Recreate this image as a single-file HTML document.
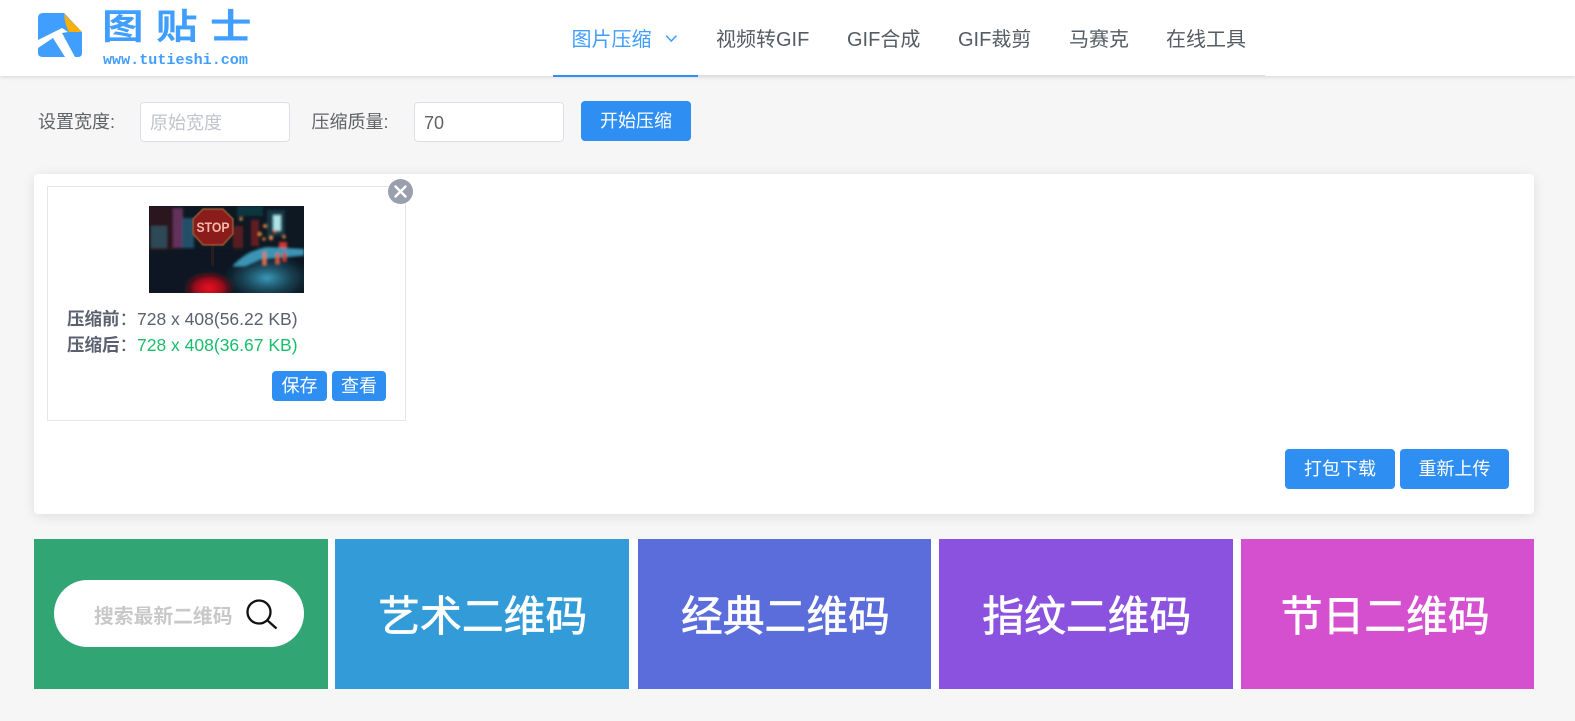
<!DOCTYPE html>
<html lang="zh"><head><meta charset="utf-8"><title>图贴士</title>
<style>
*{box-sizing:border-box}
html,body{margin:0;padding:0}
body{width:1575px;height:721px;overflow:hidden;position:relative;background:#f6f6f6;font-family:"Liberation Sans","Noto Sans CJK SC",sans-serif;color:#606266;font-size:14px}
.a{position:absolute;white-space:nowrap}
.nav{font-size:20px;top:26px;line-height:29px;color:#545c64}
.lbl{font-size:18px;color:#606266;top:110px;line-height:24px}
.inp{top:102px;width:150px;height:40px;background:#fff;border:1px solid #dcdfe6;border-radius:4px;font-size:18px;line-height:40px;padding-left:9px}
.btn{background:#2e8ef2;color:#fff;border-radius:4px;text-align:center}
.ban{top:539px;width:293.500px;height:150px;color:#fff;font-size:41.800px;line-height:156px;text-align:center;font-weight:400;-webkit-text-stroke:.7px #fff;padding-left:2px}
</style></head><body>

<div class="a" style="left:0;top:0;width:1575px;height:76px;background:#fff;box-shadow:0 1px 4px rgba(0,0,0,.14)"></div>
<svg class="a" style="left:38px;top:13px" width="45" height="45" viewBox="0 0 45 45">
<path d="M5 0H26L44 19V40Q44 44 40 44H5Q0 44 0 40V5Q0 0 5 0Z" fill="#409eff"/>
<path d="M26 1L44 19H31Q27 12 26 1Z" fill="#fdb003"/>
<path d="M0 27L24 15L30 19L24 20L37 44H27L15 25L0 35Z" fill="#fff"/>
</svg>
<div class="a" style="left:102px;top:6px;font-size:35px;line-height:44px;letter-spacing:10.300px;color:#409eff;font-weight:700;transform:scaleX(1.19);transform-origin:0 0">图贴士</div>
<div class="a" style="left:103px;top:52px;font-family:'Liberation Mono',monospace;font-size:15.100px;line-height:16px;color:#409eff;font-weight:700">www.tutieshi.com</div>

<div class="a" style="left:553px;top:75px;width:712px;height:1px;background:#dcdcde"></div>
<div class="a" style="left:553px;top:75px;width:145px;height:2px;background:#2e8ef2"></div>
<div class="a nav" style="left:571.500px;color:#409eff">图片压缩</div>
<svg class="a" style="left:664.500px;top:33px" width="13" height="11" viewBox="0 0 13 11"><path d="M1.200 2.700L6.300 8L11.400 2.700" fill="none" stroke="#409eff" stroke-width="1.500"/></svg>
<div class="a nav" style="left:716px">视频转GIF</div>
<div class="a nav" style="left:847px">GIF合成</div>
<div class="a nav" style="left:958px">GIF裁剪</div>
<div class="a nav" style="left:1069px">马赛克</div>
<div class="a nav" style="left:1166px">在线工具</div>

<div class="a lbl" style="left:38px">设置宽度:</div>
<div class="a inp" style="left:140px;color:#c0c4cc">原始宽度</div>
<div class="a lbl" style="left:311.500px">压缩质量:</div>
<div class="a inp" style="left:414px;color:#606266">70</div>
<div class="a btn" style="left:581px;top:101px;width:110px;height:40px;font-size:18px;line-height:41px">开始压缩</div>

<div class="a" style="left:34px;top:174px;width:1500px;height:340px;background:#fff;border-radius:4px;box-shadow:0 2px 12px rgba(0,0,0,.1)"></div>
<div class="a" style="left:47px;top:186px;width:359px;height:235px;border:1px solid #e6e6e6;background:#fff"></div>
<svg class="a" style="left:149px;top:206px" width="155" height="87" viewBox="0 0 155 87">
<defs>
<radialGradient id="r1"><stop offset="0" stop-color="#f00a24"/><stop offset=".55" stop-color="#9a0a1c"/><stop offset="1" stop-color="#5a0a14" stop-opacity="0"/></radialGradient>
<radialGradient id="r2"><stop offset="0" stop-color="#3a9cbc"/><stop offset="1" stop-color="#1c5a74" stop-opacity="0"/></radialGradient>
<filter id="b"><feGaussianBlur stdDeviation="1.300"/></filter>
<filter id="b2"><feGaussianBlur stdDeviation=".4"/></filter>
</defs>
<rect width="155" height="87" fill="#0e1822"/>
<g filter="url(#b)">
<rect x="0" y="0" width="24" height="44" fill="#2a161c"/>
<rect x="2" y="20" width="16" height="22" fill="#2e4856"/>
<rect x="24" y="2" width="10" height="40" fill="#62305c"/>
<rect x="33" y="12" width="12" height="30" fill="#225068"/>
<rect x="84" y="20" width="10" height="22" fill="#5a1c22"/>
<rect x="102" y="14" width="8" height="26" fill="#641c20"/>
<rect x="88" y="0" width="26" height="10" fill="#103640"/>
<rect x="118" y="4" width="18" height="26" fill="#1c5866" opacity=".5"/>
<rect x="124" y="9" width="8" height="16" fill="#a8e4e8"/>
<circle cx="122" cy="32" r="2" fill="#ffa050"/>
<circle cx="92" cy="13" r="1.500" fill="#ffb060"/><circle cx="116" cy="20" r="1.800" fill="#ff9a40"/>
<circle cx="126" cy="25" r="1.500" fill="#ff8040"/><circle cx="111" cy="28" r="1.800" fill="#ffa040"/>
<circle cx="115" cy="33" r="1.500" fill="#ffa040"/><circle cx="135" cy="31" r="1.500" fill="#ffa040"/>
<rect x="130" y="36" width="8" height="6" fill="#d83030"/>
<rect x="0" y="45" width="155" height="42" fill="#0c1822"/>
<ellipse cx="118" cy="72" rx="44" ry="24" fill="url(#r2)"/>
<path d="M84 60Q100 44 118 41L155 43V49L112 53L96 60Z" fill="#3a94b4"/>
<ellipse cx="60" cy="82" rx="26" ry="17" fill="url(#r1)"/>
<rect x="114" y="46" width="3" height="13" fill="#e07a48"/>
<rect x="127" y="47" width="3" height="11" fill="#d86040"/>
<rect x="134" y="46" width="3" height="9" fill="#d04030"/>
</g>
<rect x="62" y="38" width="3" height="22" fill="#2a1c1c"/>
<path d="M54 3H74L84 13V28L74 39H54L44 28V13Z" fill="#8a1a1c" stroke="#a06438" stroke-width="1.200" filter="url(#b2)"/>
<text x="64" y="26" text-anchor="middle" font-family="Liberation Sans,sans-serif" font-weight="700" font-size="13.500" fill="#f8b8a8" textLength="33" lengthAdjust="spacingAndGlyphs">STOP</text>
</svg>
<div class="a" style="left:388px;top:179px;width:25px;height:25px;border-radius:50%;background:#9a9fae"></div>
<svg class="a" style="left:388px;top:179px" width="25" height="25" viewBox="0 0 25 25"><path d="M7.500 7.500L17.500 17.500M17.500 7.500L7.500 17.500" stroke="#fff" stroke-width="2.400" stroke-linecap="round"/></svg>

<div class="a" style="left:67px;top:306px;font-size:17.500px;line-height:26px;color:#5a6070"><b>压缩前</b>：<span>728 x 408(56.22 KB)</span></div>
<div class="a" style="left:67px;top:332px;font-size:17.500px;line-height:26px;color:#5a6070"><b>压缩后</b>：<span style="color:#19be6b">728 x 408(36.67 KB)</span></div>
<div class="a btn" style="left:272px;top:371px;width:55px;height:30px;font-size:18px;line-height:30px">保存</div>
<div class="a btn" style="left:332px;top:371px;width:54px;height:30px;font-size:18px;line-height:30px">查看</div>

<div class="a btn" style="left:1285px;top:449px;width:110px;height:40px;font-size:18px;line-height:41px">打包下载</div>
<div class="a btn" style="left:1400px;top:449px;width:109px;height:40px;font-size:18px;line-height:41px">重新上传</div>

<div class="a" style="left:34px;top:539px;width:1500px;height:150px;background:#fff"></div>
<div class="a" style="left:34px;top:539px;width:294px;height:150px;background:#31a573"></div>
<div class="a" style="left:54px;top:580px;width:250px;height:67px;border-radius:34px;background:#fff"></div>
<div class="a" style="left:94px;top:603px;font-size:19.800px;line-height:29px;font-weight:700;color:#c8c8c8">搜索最新二维码</div>
<svg class="a" style="left:244px;top:598px" width="36" height="34" viewBox="0 0 36 34"><circle cx="15" cy="14" r="11.500" fill="none" stroke="#111" stroke-width="2.300"/><path d="M23.200 22.200L32.500 30.500" stroke="#111" stroke-width="2.300"/></svg>
<div class="a ban" style="left:335px;background:#339cd8">艺术二维码</div>
<div class="a ban" style="left:637.700px;background:#5b6ddb">经典二维码</div>
<div class="a ban" style="left:939px;background:#8a52df">指纹二维码</div>
<div class="a ban" style="left:1240.500px;padding-left:0;padding-right:4px;background:#d450cf">节日二维码</div>
</body></html>
